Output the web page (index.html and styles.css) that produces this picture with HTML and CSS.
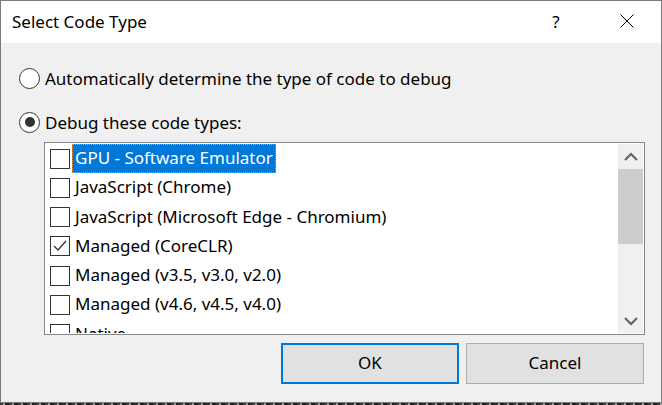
FILE: index.html
```html
<!DOCTYPE html>
<html>
<head>
<meta charset="utf-8">
<link rel="stylesheet" href="styles.css">
</head>
<body>
<div class="window">
  <div class="titlebar">
    <div class="title">Select Code Type</div>
    <div class="help">?</div>
    <div class="close">
      <svg width="14" height="14" viewBox="0 0 14 14"><path d="M0.5 0.5 L13.5 13.5 M13.5 0.5 L0.5 13.5" stroke="#000" stroke-width="1" fill="none"/></svg>
    </div>
  </div>
  <div class="content">
    <label class="radio-row">
      <span class="radio"></span>
      <span class="label">Automatically determine the type of code to debug</span>
    </label>
    <label class="radio-row second">
      <span class="radio checked"><span class="dot"></span></span>
      <span class="label">Debug these code types:</span>
    </label>
    <div class="listbox">
      <div class="items">
        <div class="item"><span class="check"></span><span class="text selected">GPU - Software Emulator</span></div>
        <div class="item"><span class="check"></span><span class="text">JavaScript (Chrome)</span></div>
        <div class="item"><span class="check"></span><span class="text">JavaScript (Microsoft Edge - Chromium)</span></div>
        <div class="item"><span class="check"><svg width="18" height="18" viewBox="0 0 18 18"><path d="M3 9 L7 13 L15 4" stroke="#333" stroke-width="1.3" fill="none"/></svg></span><span class="text">Managed (CoreCLR)</span></div>
        <div class="item"><span class="check"></span><span class="text">Managed (v3.5, v3.0, v2.0)</span></div>
        <div class="item"><span class="check"></span><span class="text">Managed (v4.6, v4.5, v4.0)</span></div>
        <div class="item"><span class="check"></span><span class="text">Native</span></div>
      </div>
      <div class="scrollbar">
        <div class="arrow up"><svg width="14" height="10" viewBox="0 0 14 10"><path d="M1 8 L7 2 L13 8" stroke="#606060" stroke-width="2" fill="none"/></svg></div>
        <div class="track"><div class="thumb"></div></div>
        <div class="arrow down"><svg width="14" height="10" viewBox="0 0 14 10"><path d="M1 2 L7 8 L13 2" stroke="#606060" stroke-width="2" fill="none"/></svg></div>
      </div>
    </div>
    <div class="buttons">
      <button class="btn default">OK</button>
      <button class="btn">Cancel</button>
    </div>
  </div>
</div>
<div class="below"></div>
</body>
</html>
```
FILE: styles.css
```css
html, body {
  margin: 0;
  padding: 0;
  width: 662px;
  height: 405px;
  overflow: hidden;
  background: #f0f0f0;
  font-family: "Noto Sans", "Open Sans", sans-serif;
  font-size: 17px;
  color: #000;
}
.window {
  width: 660px;
  height: 401px;
  border: 1px solid #7a7a7a;
  display: flex;
  flex-direction: column;
  background: #f0f0f0;
}
.titlebar {
  height: 42px;
  background: #fff;
  display: flex;
  align-items: center;
  position: relative;
}
.title {
  margin-left: 11px;
  margin-top: -1px;
  flex: 1;
}
.help {
  width: 20px;
  text-align: center;
  margin-right: 54px;
  margin-top: -1px;
}
.close {
  width: 14px;
  height: 14px;
  margin-right: 27px;
  margin-top: -3px;
}
.close svg { display: block; }
.content {
  flex: 1;
  display: flex;
  flex-direction: column;
  padding: 0 17px 0 18px;
}
.radio-row {
  display: flex;
  align-items: center;
  height: 22px;
  margin-top: 24px;
}
.radio-row.second { margin-top: 22px; }
.radio {
  width: 19px;
  height: 19px;
  border: 1px solid #333;
  border-radius: 50%;
  background: #fff;
  display: flex;
  align-items: center;
  justify-content: center;
  flex: none;
}
.dot {
  width: 10px;
  height: 10px;
  border-radius: 50%;
  background: #333;
}
.label {
  margin-left: 5px;
  margin-top: 1px;
}
.listbox {
  margin-left: 25px;
  margin-top: 9px;
  width: 598px;
  height: 189px;
  border: 1px solid #828790;
  background: #fff;
  display: flex;
  padding: 1px 1px 1px 0;
  box-sizing: content-box;
  overflow: hidden;
}
.items {
  flex: 1;
  overflow: hidden;
}
.item {
  height: 29.25px;
  display: flex;
  align-items: center;
  padding-left: 5px;
}
.check {
  width: 18px;
  height: 18px;
  border: 1px solid #333;
  background: #fff;
  flex: none;
}
.check svg { display: block; }
.text {
  margin-left: 2px;
  padding: 1px 2px 3px 2px;
  border: 1px dotted transparent;
}
.text.selected {
  background: #0078d7;
  color: #fff;
  border: 1px dotted #e89a4a;
}
.scrollbar {
  width: 25px;
  background: #f0f0f0;
  display: flex;
  flex-direction: column;
  flex: none;
}
.arrow {
  height: 25px;
  display: flex;
  align-items: center;
  justify-content: center;
}
.arrow svg { display: block; }
.track { flex: 1; }
.thumb {
  height: 75px;
  background: #cdcdcd;
}
.buttons {
  display: flex;
  justify-content: flex-end;
  gap: 7px;
  margin-top: 8px;
}
.btn {
  width: 178px;
  height: 41px;
  font-family: inherit;
  font-size: inherit;
  color: #000;
  background: #e1e1e1;
  border: 1px solid #adadad;
  padding: 0 0 2px 0;
  margin: 0;
}
.btn.default {
  border: 2px solid #0078d7;
}
.below {
  height: 2px;
  background: repeating-linear-gradient(90deg, #3a3a3a 0 3px, #9a9a9a 3px 5px, #202020 5px 9px);
}
```
